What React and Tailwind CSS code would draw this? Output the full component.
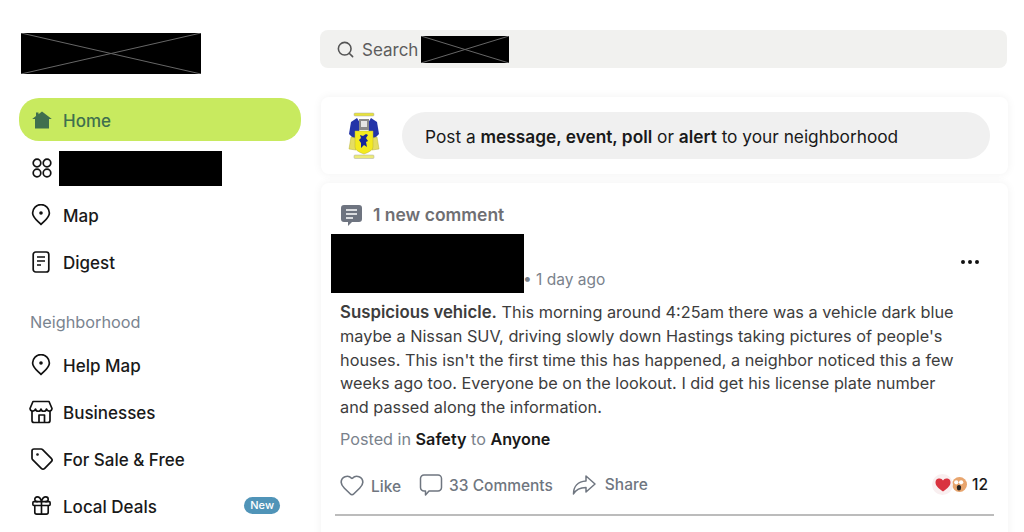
import React from 'react';
import { Search, Tag, Gift, Heart, MoreHorizontal } from 'lucide-react';

const HomeIcon = () => (
    <svg width="20" height="18" viewBox="0 0 20 18" className="shrink-0">
        <path d="M10 .5L19.800 8H17v9.500H3V8H.2L4 5.100V1.500h2.500v1.700z" fill="#3f6f4e" />
    </svg>
);

const AppsIcon = () => (
    <svg width="22" height="20" viewBox="0 0 22 20" fill="none" stroke="#111" strokeWidth="1.700" className="shrink-0">
        <circle cx="6" cy="5" r="3.800" />
        <circle cx="16" cy="5" r="3.800" />
        <circle cx="6" cy="15" r="3.800" />
        <circle cx="16" cy="15" r="3.800" />
    </svg>
);

const PinIcon = () => (
    <svg width="20" height="22" viewBox="0 0 20 22" fill="none" stroke="#111" strokeWidth="1.700" className="ml-[1px] shrink-0">
        <path d="M10 20.500C6 16.500 1.600 13.500 1.600 9a8.400 8.400 0 0 1 16.800 0c0 4.500-4.400 7.500-8.400 11.500z" strokeLinejoin="round" />
        <circle cx="10" cy="9" r="1.800" fill="#111" stroke="none" />
    </svg>
);

const DigestIcon = () => (
    <svg width="18" height="22" viewBox="0 0 18 22" fill="none" stroke="#111" strokeWidth="1.700" className="ml-[2px] shrink-0">
        <rect x="1.200" y="1" width="15.600" height="20" rx="2.500" />
        <path d="M5 6h8M5 10h8M5 14h4" strokeWidth="1.400" />
    </svg>
);

const StoreIcon = () => (
    <svg width="24" height="24" viewBox="0 0 24 24" fill="none" stroke="#111" strokeWidth="1.700" strokeLinejoin="round" className="-ml-[1px] shrink-0">
        <path d="M4 1.500h16l3 7a2.800 2.800 0 0 1-5.500.5 2.800 2.800 0 0 1-5.500 0 2.800 2.800 0 0 1-5.500 0A2.800 2.800 0 0 1 1 8.500z" />
        <path d="M3 11v9.500a2 2 0 0 0 2 2h14a2 2 0 0 0 2-2V11" />
        <path d="M10 22.500V15h5.500v7.500" />
    </svg>
);

const Redacted = ({ className }) => (
    <svg className={className} preserveAspectRatio="none" viewBox="0 0 100 100">
        <rect width="100" height="100" fill="#000" />
        <path d="M0 0L100 100M100 0L0 100" stroke="#666" strokeWidth="1" vectorEffect="non-scaling-stroke" />
    </svg>
);

const CrestIcon = () => (
    <svg width="32" height="48" viewBox="0 0 32 48" className="shrink-0">
        <rect x="6" y="1" width="20" height="3" rx="1" fill="#e8e23c" stroke="#aaa" strokeWidth=".5" />
        <path d="M1 22L3 10l6-4 3 5-1 11-5 5z" fill="#2434a8" />
        <path d="M31 22L29 10l-6-4-3 5 1 11 5 5z" fill="#2434a8" />
        <path d="M11 7h10v11H11z" fill="#8a8a8a" />
        <path d="M13 9h6v6h-6z" fill="#e5e5e5" />
        <path d="M1 37l2-12 5 1v12zM31 37l-2-12-5 1v12z" fill="#e5dd62" stroke="#b9b23a" strokeWidth=".5" />
        <path d="M7 19h18v16q0 4-9 7-9-3-9-7z" fill="#f4ea1e" stroke="#b9b23a" strokeWidth=".5" />
        <path d="M12 23l3 1 3-2 2 1-2 3 2 3-2 1 1 5-3-2-3 3v-5l-2-3 2-2z" fill="#16249b" />
        <rect x="6" y="43" width="20" height="3.500" rx="1" fill="#ecea78" stroke="#aaa" strokeWidth=".5" />
    </svg>
);

const NavItem = ({ icon, label, badge }) => (
    <div className="h-[47px] flex items-center pl-[11px] pr-[21px] text-[17px] font-medium text-[#191919]">
        <div className="w-[33px] flex justify-start">{icon}</div>
        <span className="pt-[4px]">{label}</span>
        {badge && <span className="ml-auto h-[17px] px-[6px] rounded-full bg-[#5094b8] text-white text-[11px] font-medium flex items-center">{badge}</span>}
    </div>
);

export default function App() {
    return (
        <div className="h-[532px] overflow-hidden flex bg-white font-['Inter',sans-serif]">
            {/* Sidebar */}
            <div className="w-[320px] shrink-0 pl-[19px] pr-[19px] pt-[33px]">
                <div className="pl-[2px]">
                    <Redacted className="block w-[180px] h-[41px]" />
                </div>
                <div className="mt-[24px] h-[43px] w-[282px] rounded-[20px] bg-[#c8ea5f] flex items-center pl-[13px] text-[17px] font-medium text-[#3f6f4e]">
                    <div className="w-[31px]"><HomeIcon /></div>
                    <span className="pt-[5px]">Home</span>
                </div>
                <div className="h-[46px] flex items-center pl-[12px] mt-[4px]">
                    <AppsIcon />
                    <div className="ml-[6px] w-[163px] h-[35px] bg-black" />
                </div>
                <NavItem icon={<PinIcon />} label="Map" />
                <NavItem icon={<DigestIcon />} label="Digest" />
                <div className="mt-[25px] pl-[11px] h-[24px] flex items-center text-[16.300px] text-[#7a8490]">Neighborhood</div>
                <div className="mt-[7px]">
                    <NavItem icon={<PinIcon />} label="Help Map" />
                    <NavItem icon={<StoreIcon />} label="Businesses" />
                    <NavItem icon={<Tag size={24} strokeWidth={1.700} color="#111" />} label="For Sale & Free" />
                    <NavItem icon={<Gift size={23} strokeWidth={1.700} color="#111" />} label="Local Deals" badge="New" />
                </div>
            </div>

            {/* Main */}
            <div className="flex-1 pr-[16px]">
                <div className="h-[97px] pt-[30px] pr-[1px]">
                    <div className="h-[38px] rounded-[8px] bg-[#f1f1ef] flex items-center pl-[16px]">
                        <Search size={19} strokeWidth={2} color="#555" />
                        <span className="ml-[7px] pt-[4px] text-[17px] text-[#5d5d5d]">Search</span>
                        <Redacted className="ml-[3px] w-[88px] h-[27px]" />
                    </div>
                </div>
                <div className="ml-[1px] h-[77px] bg-white rounded-[8px] shadow-[0_0_10px_rgba(0,0,0,0.06)] flex items-center pl-[27px] pr-[18px]">
                    <CrestIcon />
                    <div className="ml-[22px] flex-1 h-[47px] rounded-full bg-[#f0f0f0] flex items-center pl-[23px] text-[17.300px] text-[#191919]">
                        <span className="pt-[2px]">Post a <b className="font-semibold">message, event, poll</b> or <b className="font-semibold">alert</b> to your neighborhood</span>
                    </div>
                </div>
                <div className="ml-[1px] mt-[9px] h-[400px] bg-white rounded-[8px] shadow-[0_0_10px_rgba(0,0,0,0.06)] pl-[10px] pr-[15px] relative">
                    <div className="pt-[20px] pl-[9px] flex items-center h-[44px] text-[17.500px] font-semibold text-[#6f6f73]">
                        <svg width="23" height="23" viewBox="0 0 23 23" className="shrink-0">
                            <path d="M4 1h15a3 3 0 0 1 3 3v11a3 3 0 0 1-3 3h-7l-4 4v-4H4a3 3 0 0 1-3-3V4a3 3 0 0 1 3-3z" fill="#6e7480" />
                            <path d="M6 6h11M6 10h11M6 14h7" stroke="#fff" strokeWidth="1.500" />
                        </svg>
                        <span className="ml-[10px]">1 new comment</span>
                    </div>
                    <div className="flex items-end mt-[7px]">
                        <div className="w-[193px] h-[59px] bg-black shrink-0" />
                        <span className="-ml-[1px] text-[15.500px] leading-[24px] text-[#7a828c] mb-[1px]">• 1 day ago</span>
                        <MoreHorizontal size={24} color="#111" className="ml-auto mr-[11px] mb-[19px]" />
                    </div>
                    <p className="mt-[8px] pl-[9px] text-[16.300px] leading-[23.750px] text-[#3d3d3d]">
                        <b className="font-semibold text-[16.800px]">Suspicious vehicle.</b> This morning around 4:25am there was a vehicle dark blue<br />
                        maybe a Nissan SUV, driving slowly down Hastings taking pictures of people's<br />
                        houses. This isn't the first time this has happened, a neighbor noticed this a few<br />
                        weeks ago too. Everyone be on the lookout. I did get his license plate number<br />
                        and passed along the information.
                    </p>
                    <div className="mt-[7px] pl-[9px] text-[16.200px] leading-[24px] text-[#7a828c]">
                        Posted in <b className="font-semibold text-[#191919]">Safety</b> to <b className="font-semibold text-[#191919]">Anyone</b>
                    </div>
                    <div className="mt-[20px] pl-[9px] flex items-center h-[28px] text-[15.500px] font-medium text-[#6f7680]">
                        <Heart size={26} strokeWidth={1.500} color="#6f7680" className="shrink-0 -ml-[1px]" />
                        <span className="ml-[6px] mt-[3px]">Like</span>
                        <svg width="24" height="24" viewBox="0 0 24 24" fill="none" stroke="#6f7680" strokeWidth="1.500" strokeLinejoin="round" className="ml-[18px] shrink-0">
                            <path d="M5 2h14a3.500 3.500 0 0 1 3.500 3.500v9A3.500 3.500 0 0 1 19 18h-9l-3.500 4v-4H5a3.500 3.500 0 0 1-3.500-3.500v-9A3.500 3.500 0 0 1 5 2z" />
                        </svg>
                        <span className="ml-[6px] mt-[2px]">33 Comments</span>
                        <svg width="24" height="22" viewBox="0 0 24 22" fill="none" stroke="#6f7680" strokeWidth="1.500" strokeLinejoin="round" className="ml-[19px] shrink-0">
                            <path d="M14 2l9 8-9 8v-4.500C8 13.500 4 15.500 1.500 20c0-7 4-12.500 12.500-13z" />
                        </svg>
                        <span className="ml-[9px]">Share</span>
                        <div className="ml-auto flex items-center pr-[5px]">
                            <div className="w-[21px] h-[21px] rounded-full bg-[#f9eff0] flex items-center justify-center z-10">
                                <svg width="16" height="14" viewBox="0 0 16 14"><path d="M8 13.500C3 10 .5 7.500.5 4.500A4 4 0 0 1 8 2.500a4 4 0 0 1 7.500 2c0 3-2.500 5.500-7.500 9z" fill="#d9333f" /></svg>
                            </div>
                            <svg width="15" height="15" viewBox="0 0 14 14" className="-ml-[1px]">
                                <circle cx="7" cy="7" r="7" fill="#e8a56e" />
                                <circle cx="4" cy="5" r="2" fill="#fff" />
                                <circle cx="8.500" cy="5" r="2" fill="#fff" />
                                <ellipse cx="6.500" cy="10" rx="2" ry="2.500" fill="#222" />
                            </svg>
                            <span className="ml-[5px] text-[15.500px] text-[#191919]">12</span>
                        </div>
                    </div>
                    <div className="mt-[15px] h-[2px] bg-[#bcbcbc] mr-[-1px] ml-[4px]" />
                </div>
            </div>
        </div>
    );
}
